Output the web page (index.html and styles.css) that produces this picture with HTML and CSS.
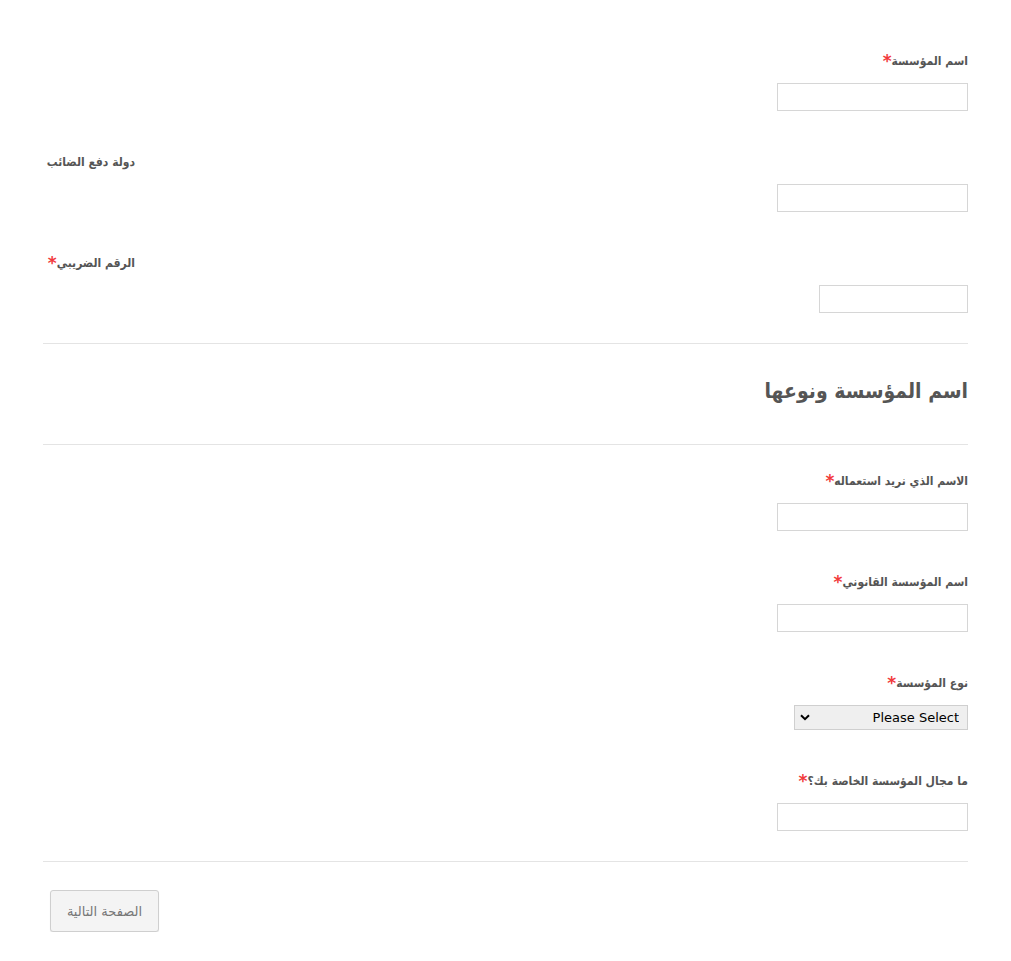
FILE: index.html
```html
<!DOCTYPE html>
<html dir="rtl" lang="ar">
<head>
<meta charset="utf-8">
<title>نموذج المؤسسة</title>
<link rel="stylesheet" href="styles.css">
</head>
<body>
<form class="form">
  <div class="row">
    <label class="label">اسم المؤسسة<span class="req">*</span></label>
    <input class="field" type="text">
  </div>
  <div class="row label-left">
    <label class="label">دولة دفع الضائب</label>
    <input class="field" type="text">
  </div>
  <div class="row label-left">
    <label class="label">الرقم الضريبي<span class="req">*</span></label>
    <input class="field short" type="text">
  </div>
  <hr class="sep">
  <div class="heading-block">
    <h2 class="heading">اسم المؤسسة ونوعها</h2>
  </div>
  <hr class="sep">
  <div class="section">
    <div class="row">
      <label class="label">الاسم الذي نريد استعماله<span class="req">*</span></label>
      <input class="field" type="text">
    </div>
    <div class="row">
      <label class="label">اسم المؤسسة القانوني<span class="req">*</span></label>
      <input class="field" type="text">
    </div>
    <div class="row">
      <label class="label">نوع المؤسسة<span class="req">*</span></label>
      <div class="select-wrap">
        <select class="select">
          <option>Please Select</option>
        </select>
        <svg class="chev" width="10" height="7" viewBox="0 0 10 7"><path d="M1 1.2 L5 5.2 L9 1.2" fill="none" stroke="#000" stroke-width="2"/></svg>
      </div>
    </div>
    <div class="row">
      <label class="label">ما مجال المؤسسة الخاصة بك؟<span class="req">*</span></label>
      <input class="field" type="text">
    </div>
  </div>
  <hr class="sep">
  <div class="buttons">
    <button type="button" class="btn">الصفحة التالية</button>
  </div>
</form>
</body>
</html>
```
FILE: styles.css
```css
html, body {
  margin: 0;
  padding: 0;
  background: #fff;
}
body {
  font-family: "DejaVu Sans Condensed", "DejaVu Sans", sans-serif;
  color: #555;
}
.form {
  display: flex;
  flex-direction: column;
  padding: 40px 43px 0 43px;
}
.row {
  display: flex;
  flex-direction: column;
  align-items: flex-start;
  padding: 12px 0 30px 0;
}
.label {
  display: block;
  font-size: 12px;
  font-weight: bold;
  line-height: 19px;
  height: 19px;
  color: #555;
  margin-bottom: 12px;
  white-space: nowrap;
}
.row.label-left .label {
  align-self: flex-end;
  width: 92px;
  text-align: right;
}
.req {
  color: #f23a3c;
  font-family: "DejaVu Sans", sans-serif;
  font-size: 17px;
  line-height: 0;
  vertical-align: -2px;
}
.field {
  box-sizing: border-box;
  width: 191px;
  height: 28px;
  border: 1px solid #d6d6d6;
  background: #fff;
  margin: 0;
  padding: 2px 4px;
  font-family: inherit;
  font-size: 13px;
}
.field.short {
  width: 149px;
}
.sep {
  margin: 0;
  border: 0;
  border-top: 1px solid #e4e4e4;
  height: 0;
}
.heading-block {
  padding: 32px 0 38px 0;
}
.heading {
  margin: 0;
  font-size: 21px;
  font-weight: bold;
  line-height: 30px;
  color: #555;
}
.section {
  padding-top: 15px;
  display: flex;
  flex-direction: column;
}
.select-wrap {
  position: relative;
  width: 174px;
  height: 25px;
}
.select {
  appearance: none;
  -webkit-appearance: none;
  box-sizing: border-box;
  width: 174px;
  height: 25px;
  margin: 0;
  border: 1px solid #cfcfcf;
  border-radius: 0;
  background: #efefef;
  font-family: "DejaVu Sans", sans-serif;
  font-size: 13px;
  color: #000;
  padding: 0 8px 0 24px;
  direction: rtl;
}
.chev {
  position: absolute;
  left: 6px;
  top: 9px;
  pointer-events: none;
}
.buttons {
  display: flex;
  justify-content: flex-end;
  padding: 28px 0 0 7px;
}
.btn {
  box-sizing: border-box;
  width: 109px;
  height: 42px;
  border: 1px solid #cfcfcf;
  border-radius: 3px;
  background: #f4f4f4;
  box-shadow: 0 1px 1px rgba(0,0,0,0.08);
  font-family: "DejaVu Sans", sans-serif;
  font-size: 13px;
  color: #777;
}
```
